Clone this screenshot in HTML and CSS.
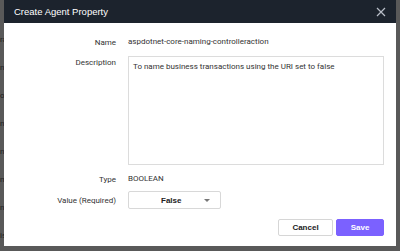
FILE: index.html
```html
<!DOCTYPE html>
<html lang="en">
<head>
  <meta charset="UTF-8">
  <title>Create Agent Property</title>
  <link rel="stylesheet" href="styles.css">
</head>
<body>
  <div class="backdrop">
    <div class="bg-line">ra</div>
    <div class="bg-line">n</div>
    <div class="bg-line">ou</div>
    <div class="bg-line">n</div>
    <div class="bg-line">n</div>
    <div class="bg-line">m</div>
    <div class="bg-line">n</div>
    <div class="bg-line">is</div>
    <div class="bg-footer">Callgraph Settings] will be used. Does not need a restart</div>
  </div>

  <div class="modal">
    <div class="modal-header">
      <span class="modal-title">Create Agent Property</span>
      <svg class="close-icon" viewBox="0 0 10 10">
        <path d="M1 1L9 9M9 1L1 9" stroke="#b8bec8" stroke-width="1.2" fill="none"/>
      </svg>
    </div>
    <div class="modal-body">
      <div class="form-row">
        <label class="form-label">Name</label>
        <div class="form-value">aspdotnet-core-naming-controlleraction</div>
      </div>
      <div class="form-row row-desc">
        <label class="form-label label-top">Description</label>
        <div class="textarea">To name business transactions using the URI set to false</div>
      </div>
      <div class="form-row row-type">
        <label class="form-label">Type</label>
        <div class="form-value">BOOLEAN</div>
      </div>
      <div class="form-row">
        <label class="form-label">Value (Required)</label>
        <div class="select">
          <span class="select-text">False</span>
          <span class="caret"></span>
        </div>
      </div>
      <div class="modal-footer">
        <button class="btn btn-cancel">Cancel</button>
        <button class="btn btn-save">Save</button>
      </div>
    </div>
  </div>
</body>
</html>
```

FILE: styles.css
```css
* {
  margin: 0;
  padding: 0;
  box-sizing: border-box;
}

body {
  width: 400px;
  height: 251px;
  overflow: hidden;
  background: #595959;
  font-family: Roboto, 'Liberation Sans', sans-serif;
  position: relative;
}

.backdrop {
  display: flex;
  flex-direction: column;
  padding-top: 26px;
  color: #1e1e1e;
  font-size: 8px;
}

.bg-line {
  height: 28px;
  line-height: 28px;
}

.bg-footer {
  padding-left: 76px;
  margin-top: 1px;
  font-size: 9px;
  line-height: 12px;
}

.modal {
  position: absolute;
  top: 0;
  left: 4px;
  width: 392px;
  height: 246px;
  background: #fff;
  display: flex;
  flex-direction: column;
}

.modal-header {
  height: 23px;
  background: #1c232d;
  display: flex;
  align-items: center;
  justify-content: space-between;
  padding: 0 10px;
}

.modal-title {
  color: #fff;
  font-family: 'Liberation Sans', Arial, sans-serif;
  font-size: 9.5px;
}

.close-icon {
  width: 10px;
  height: 10px;
  margin-top: 1px;
}

.modal-body {
  display: flex;
  flex-direction: column;
  padding: 13px 12px 0 0;
}

.form-row {
  display: flex;
  align-items: center;
  gap: 12px;
  margin-bottom: 8px;
  font-size: 8px;
  color: #333;
}

.row-desc {
  align-items: flex-start;
  margin-bottom: 8px;
}

.row-type {
  margin-bottom: 6px;
}

.form-label {
  width: 112px;
  text-align: right;
  flex-shrink: 0;
}

.label-top {
  padding-top: 2px;
}

.form-value {
  line-height: 12px;
}

.textarea {
  width: 256px;
  height: 109px;
  border: 1px solid #dcdcdc;
  padding: 5px 4px;
  line-height: 10px;
}

.select {
  width: 93px;
  height: 18px;
  border: 1px solid #d8d8d8;
  border-radius: 2px;
  display: flex;
  align-items: center;
  padding: 0 10px 0 32px;
  justify-content: space-between;
}

.select-text {
  font-family: 'Liberation Sans', Arial, sans-serif;
  font-weight: bold;
  font-size: 8px;
  color: #222;
}

.caret {
  width: 0;
  height: 0;
  border-left: 3px solid transparent;
  border-right: 3px solid transparent;
  border-top: 3px solid #777;
}

.modal-footer {
  display: flex;
  justify-content: flex-end;
  gap: 3px;
  margin-top: 2px;
}

.btn {
  height: 17px;
  font-family: 'Liberation Sans', Arial, sans-serif;
  font-weight: bold;
  font-size: 8px;
  border-radius: 2px;
}

.btn-cancel {
  width: 55px;
  background: #fff;
  border: 1px solid #d6d6d6;
  color: #222;
}

.btn-save {
  width: 48px;
  background: #7b61ff;
  border: 1px solid #7b61ff;
  color: #fff;
}
```
